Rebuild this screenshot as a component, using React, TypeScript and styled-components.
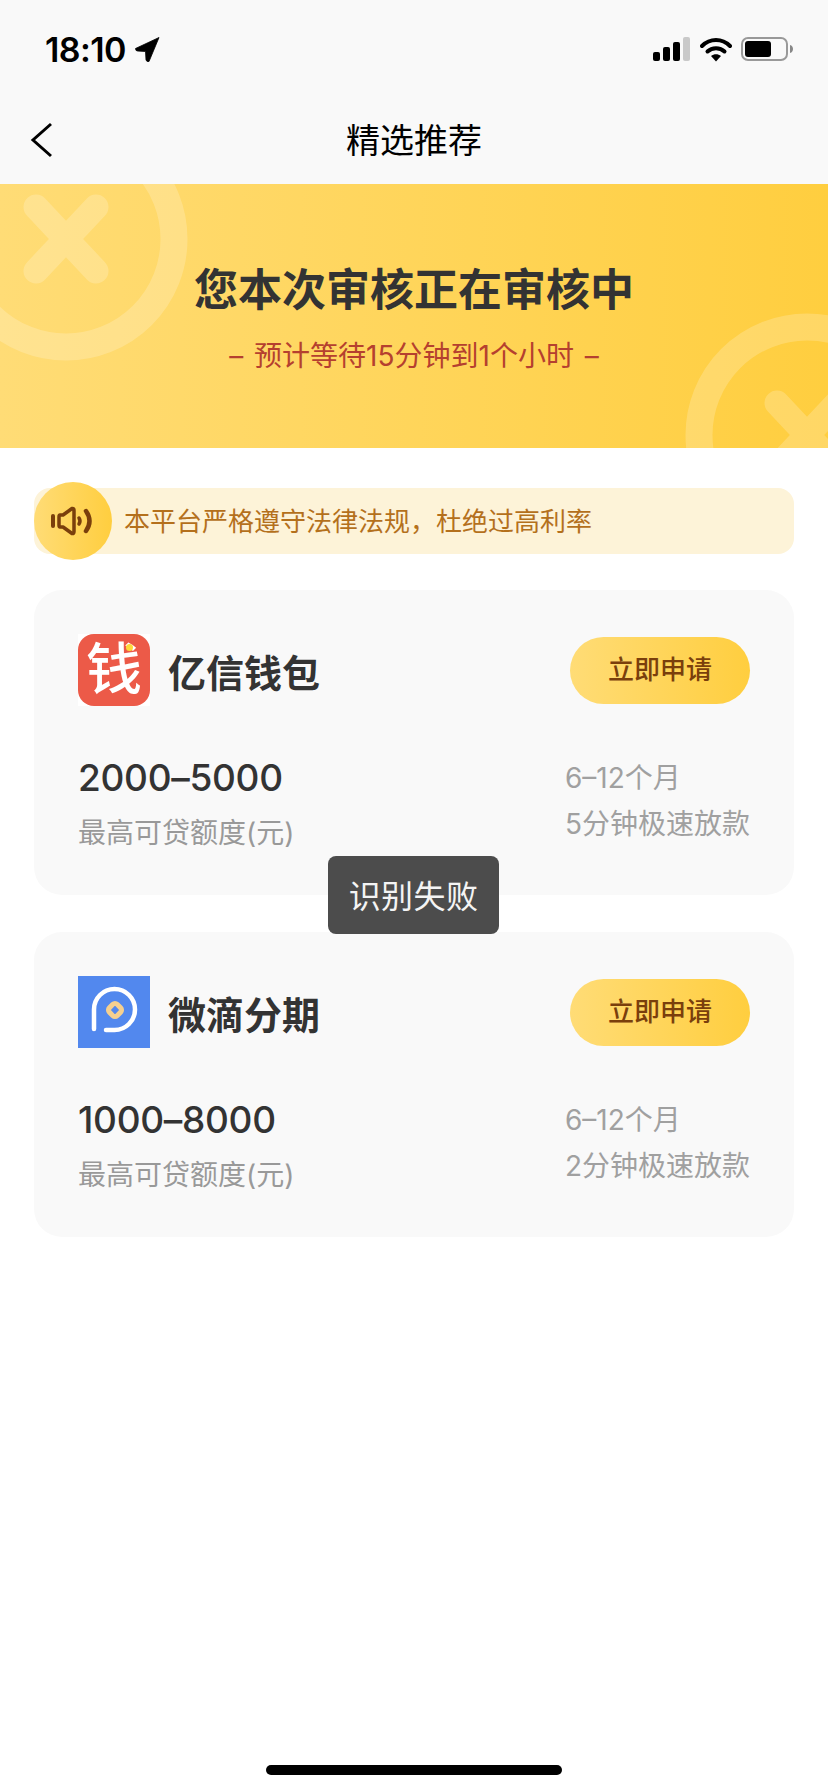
import React from 'react';
import styled, { createGlobalStyle } from 'styled-components';

const GlobalStyle = createGlobalStyle`
  html, body {
    margin: 0;
    padding: 0;
    background: #fff;
  }
  body {
    font-family: "Inter", "Noto Sans CJK SC", sans-serif;
    color: #333;
  }
`;

const Page = styled.div`
  position: relative;
  width: 828px;
  min-height: 1792px;
  display: flex;
  flex-direction: column;
  background: #fff;
  overflow: hidden;
`;

const Top = styled.header`
  height: 184px;
  background: #f9f9f9;
  display: flex;
  flex-direction: column;
`;

const StatusBar = styled.div`
  height: 98px;
  padding: 0 33px 0 45px;
  display: flex;
  align-items: center;
  justify-content: space-between;
  box-sizing: border-box;
`;

const Clock = styled.div`
  display: flex;
  align-items: center;
  gap: 9px;
  font-size: 34px;
  font-weight: 600;
  letter-spacing: -0.6px;
  color: #000;
`;

const StatusIcons = styled.div`
  display: flex;
  align-items: center;
  gap: 9px;
`;

const NavBar = styled.nav`
  position: relative;
  height: 86px;
  display: flex;
  align-items: center;
  justify-content: center;
`;

const BackIcon = styled.svg`
  position: absolute;
  left: 30px;
  top: 24px;
`;

const NavTitle = styled.h1`
  margin: 0;
  font-size: 34px;
  font-weight: 400;
  color: #000;
  position: relative;
  top: -3px;
`;

const Banner = styled.section`
  position: relative;
  height: 264px;
  overflow: hidden;
  background: linear-gradient(90deg, #ffdc76 0%, #ffce3f 100%);
  display: flex;
  flex-direction: column;
  align-items: center;
  padding-top: 78px;
  box-sizing: border-box;
`;

const Deco = styled.svg<{ $left: number; $top: number }>`
  position: absolute;
  left: ${p => p.$left}px;
  top: ${p => p.$top}px;
`;

const BannerTitle = styled.h2`
  position: relative;
  margin: 0;
  font-size: 44px;
  line-height: 56px;
  font-weight: 600;
  color: #333;
`;

const BannerSub = styled.p`
  position: relative;
  margin: 18px 0 0;
  font-size: 28px;
  line-height: 40px;
  color: #b5402f;
  white-space: pre;
  word-spacing: 3px;
`;

const Content = styled.main`
  padding: 40px 34px 0;
  display: flex;
  flex-direction: column;
`;

const Notice = styled.div`
  position: relative;
  height: 66px;
  box-sizing: border-box;
  border-radius: 16px;
  background: #fdf3d8;
  display: flex;
  align-items: center;
  padding: 0 0 3px 90px;
  font-size: 26px;
  color: #b4701c;
`;

const NoticeBadge = styled.div`
  position: absolute;
  left: 0;
  top: -6px;
  width: 78px;
  height: 78px;
  padding-right: 2px;
  box-sizing: border-box;
  border-radius: 50%;
  background: linear-gradient(90deg, #ffdc76, #ffce3f);
  display: flex;
  align-items: center;
  justify-content: center;
`;

const Card = styled.article`
  margin-top: 36px;
  height: 305px;
  box-sizing: border-box;
  padding: 44px 44px 0;
  border-radius: 28px;
  background: #f9f9f9;
  display: flex;
  flex-direction: column;
  & + & {
    margin-top: 37px;
  }
`;

const CardHead = styled.div`
  display: flex;
  align-items: center;
  height: 72px;
`;

const LogoFrame = styled.div`
  width: 72px;
  height: 72px;
  background: #fff;
`;

const WalletLogo = styled.div`
  position: relative;
  width: 72px;
  height: 72px;
  border-radius: 16px;
  background: #ec5a48;
  color: #fff;
  font-size: 56px;
  line-height: 70px;
  font-weight: 500;
  text-align: center;
  overflow: hidden;
  &::after {
    content: "";
    position: absolute;
    right: 17px;
    top: 10px;
    width: 7px;
    height: 7px;
    border-radius: 50%;
    background: #ffd93a;
  }
`;

const LoanName = styled.div`
  margin-left: 18px;
  font-size: 38px;
  font-weight: 600;
  color: #333;
  flex: 1;
`;

const ApplyButton = styled.button`
  width: 180px;
  height: 67px;
  border: 0;
  border-radius: 34px;
  padding: 0 0 5px;
  background: linear-gradient(90deg, #ffdc76, #ffce3f);
  color: #7a3f0c;
  font-family: inherit;
  font-size: 26px;
  font-weight: 500;
`;

const CardBody = styled.div`
  margin-top: 49px;
  display: flex;
  justify-content: space-between;
`;

const Amount = styled.div`
  font-size: 37px;
  line-height: 46px;
  font-weight: 500;
  letter-spacing: -0.3px;
  color: #333;
`;

const Caption = styled.div`
  margin-top: 9px;
  font-size: 28px;
  line-height: 46px;
  color: #999;
`;

const Terms = styled.div`
  font-size: 28px;
  line-height: 46px;
  color: #a0a0a0;
`;

const Toast = styled.div`
  position: absolute;
  left: 328px;
  top: 856px;
  width: 171px;
  height: 78px;
  padding-bottom: 2px;
  box-sizing: border-box;
  border-radius: 8px;
  background: #4c4c4c;
  color: #f4f4f4;
  font-size: 32px;
  letter-spacing: 0.4px;
  display: flex;
  align-items: center;
  justify-content: center;
`;

const HomeBar = styled.div`
  margin: auto auto 17px;
  width: 296px;
  height: 10px;
  border-radius: 5px;
  background: #000;
`;

const CrossBadge: React.FC<{ left: number; top: number }> = ({ left, top }) => (
  <Deco $left={left} $top={top} width="244" height="244" viewBox="0 0 244 244" fill="none">
    <circle cx="122" cy="122" r="108" stroke="#fff" strokeOpacity="0.2" strokeWidth="27" />
    <path d="M92 90 L152 154 M152 90 L92 154" stroke="#fff" strokeOpacity="0.2" strokeWidth="25" strokeLinecap="round" />
  </Deco>
);

const loans = [
  { name: '亿信钱包', amount: '2000–5000', speed: '5分钟极速放款', logo: 'wallet' },
  { name: '微滴分期', amount: '1000–8000', speed: '2分钟极速放款', logo: 'drop' },
];

export default function App() {
  return (
    <Page>
      <GlobalStyle />
      <Top>
        <StatusBar>
          <Clock>
            18:10
            <svg width="25" height="25" viewBox="0 0 24 25">
              <path d="M23.5 0.5 L0 11.5 Q0 14 2 14 L10 14.5 L10.5 23 Q11 25 13.5 24.5 Z" fill="#000" stroke="#000" strokeWidth="0.8" strokeLinejoin="round" />
            </svg>
          </Clock>
          <StatusIcons>
            <svg width="38" height="24" viewBox="0 0 38 24">
              <rect x="0" y="15" width="7" height="9" rx="2" fill="#000" />
              <rect x="10" y="10" width="7" height="14" rx="2" fill="#000" />
              <rect x="20" y="5" width="7" height="19" rx="2" fill="#000" />
              <rect x="30" y="0" width="7" height="24" rx="2" fill="#c9c9c9" />
            </svg>
            <svg width="32" height="25" viewBox="0 0 32 25" fill="none">
              <path d="M2 9 C10 1 22 1 30 9" stroke="#000" strokeWidth="4" strokeLinecap="round" />
              <path d="M7.5 14.5 C12 10 20 10 24.5 14.5" stroke="#000" strokeWidth="4" strokeLinecap="round" />
              <path d="M11 19 L16 24.5 L21 19 C18 16.5 14 16.5 11 19 Z" fill="#000" />
            </svg>
            <svg width="54" height="24" viewBox="0 0 54 24" fill="none">
              <rect x="1" y="1" width="45" height="22" rx="6" stroke="#999" strokeWidth="2" />
              <rect x="4" y="4" width="26" height="16" rx="3" fill="#000" />
              <path d="M49 8 C53 9 53 15 49 16 Z" fill="#888" />
            </svg>
          </StatusIcons>
        </StatusBar>
        <NavBar>
          <BackIcon width="24" height="36" viewBox="0 0 24 36" fill="none">
            <path d="M21 2 L3 18 L21 34" stroke="#000" strokeWidth="3" />
          </BackIcon>
          <NavTitle>精选推荐</NavTitle>
        </NavBar>
      </Top>

      <Banner>
        <CrossBadge left={-56} top={-67} />
        <CrossBadge left={685} top={129} />
        <BannerTitle>您本次审核正在审核中</BannerTitle>
        <BannerSub>– 预计等待15分钟到1个小时 –</BannerSub>
      </Banner>

      <Content>
        <Notice>
          <NoticeBadge>
            <svg width="42" height="30" viewBox="0 0 42 30" fill="none">
              <path d="M2 10 V20" stroke="#7a3f0c" strokeWidth="4" strokeLinecap="round" />
              <path
                d="M9 9 H12 L21 2.5 Q23 2 23 4.5 V25.5 Q23 28 21 27.5 L12 21 H9 Q8 21 8 19 V11 Q8 9 9 9 Z"
                stroke="#7a3f0c"
                strokeWidth="3.5"
                strokeLinejoin="round"
              />
              <path d="M28 12 Q30 15 28 18" stroke="#7a3f0c" strokeWidth="3.5" strokeLinecap="round" />
              <path d="M35 5 Q42 15 35 25" stroke="#7a3f0c" strokeWidth="4.5" strokeLinecap="round" />
            </svg>
          </NoticeBadge>
          本平台严格遵守法律法规，杜绝过高利率
        </Notice>

        {loans.map(loan => (
          <Card key={loan.name}>
            <CardHead>
              {loan.logo === 'wallet' ? (
                <LogoFrame>
                  <WalletLogo>钱</WalletLogo>
                </LogoFrame>
              ) : (
                <svg width="72" height="72" viewBox="0 0 72 72" fill="none">
                  <rect width="72" height="72" fill="#5288ee" />
                  <path d="M16 53 V33.5 A20.5 20.5 0 1 1 36.5 54 H28" stroke="#fff" strokeWidth="4.5" strokeLinecap="round" />
                  <rect x="31.5" y="28.5" width="11" height="11" rx="3" transform="rotate(45 37 34)" stroke="#f5d08f" strokeWidth="5" />
                </svg>
              )}
              <LoanName>{loan.name}</LoanName>
              <ApplyButton>立即申请</ApplyButton>
            </CardHead>
            <CardBody>
              <div>
                <Amount>{loan.amount}</Amount>
                <Caption>最高可贷额度(元)</Caption>
              </div>
              <Terms>
                <div>6–12个月</div>
                <div>{loan.speed}</div>
              </Terms>
            </CardBody>
          </Card>
        ))}
      </Content>

      <Toast>识别失败</Toast>
      <HomeBar />
    </Page>
  );
}
